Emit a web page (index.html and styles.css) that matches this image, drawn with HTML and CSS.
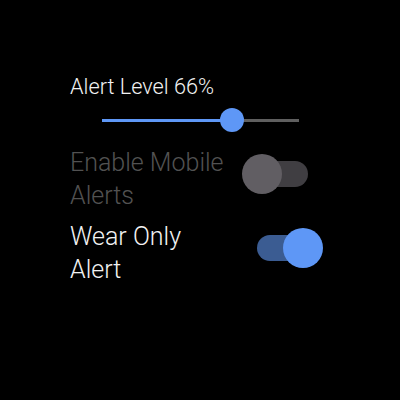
FILE: index.html
```html
<!DOCTYPE html>
<html>
<head>
<meta charset="utf-8">
<link rel="stylesheet" href="styles.css">
</head>
<body>
<div class="screen">
  <div class="slider-label">Alert Level 66%</div>
  <div class="slider">
    <div class="slider-track">
      <div class="slider-fill" style="width: 130px"></div>
    </div>
    <div class="slider-thumb" style="left: 118px"></div>
  </div>
  <div class="setting disabled">
    <div class="setting-label">Enable Mobile Alerts</div>
    <div class="toggle off">
      <div class="toggle-track"></div>
      <div class="toggle-thumb"></div>
    </div>
  </div>
  <div class="setting">
    <div class="setting-label">Wear Only Alert</div>
    <div class="toggle on">
      <div class="toggle-track"></div>
      <div class="toggle-thumb"></div>
    </div>
  </div>
</div>
</body>
</html>
```
FILE: styles.css
```css
html, body {
  margin: 0;
  padding: 0;
  background: #000;
}
body {
  width: 400px;
  height: 400px;
  overflow: hidden;
  font-family: Roboto, "Liberation Sans", sans-serif;
  color: #f2f2f2;
}
.screen {
  padding: 74px 0 0 70px;
  display: flex;
  flex-direction: column;
}
.slider-label {
  font-size: 21.7px;
  line-height: 25px;
  font-weight: 300;
}
.slider {
  position: relative;
  margin: 9px 0 0 32px;
  width: 197px;
  height: 24px;
}
.slider-track {
  position: absolute;
  left: 0;
  right: 0;
  top: 11px;
  height: 3px;
  background: #5f5f5f;
}
.slider-fill {
  height: 100%;
  background: #5e97f6;
}
.slider-thumb {
  position: absolute;
  top: 0;
  width: 24px;
  height: 24px;
  border-radius: 50%;
  background: #5e97f6;
}
.setting {
  display: flex;
  align-items: flex-start;
  margin-top: 14px;
}
.setting + .setting {
  margin-top: 8px;
}
.setting-label {
  width: 160px;
  font-size: 25px;
  line-height: 33px;
  font-weight: 300;
}
.setting.disabled .setting-label {
  color: #525252;
}
.toggle {
  position: relative;
  margin: 8px 0 0 12px;
  width: 81px;
  height: 40px;
}
.toggle-track {
  position: absolute;
  left: 15px;
  top: 7px;
  width: 51px;
  height: 26px;
  border-radius: 13px;
}
.toggle-thumb {
  position: absolute;
  top: 0;
  width: 40px;
  height: 40px;
  border-radius: 50%;
}
.toggle.off .toggle-track { background: #403e42; }
.toggle.off .toggle-thumb { left: 0; background: #615e63; }
.toggle.on .toggle-track { background: #3b5c92; }
.toggle.on .toggle-thumb { left: 41px; background: #5e97f6; }
```
